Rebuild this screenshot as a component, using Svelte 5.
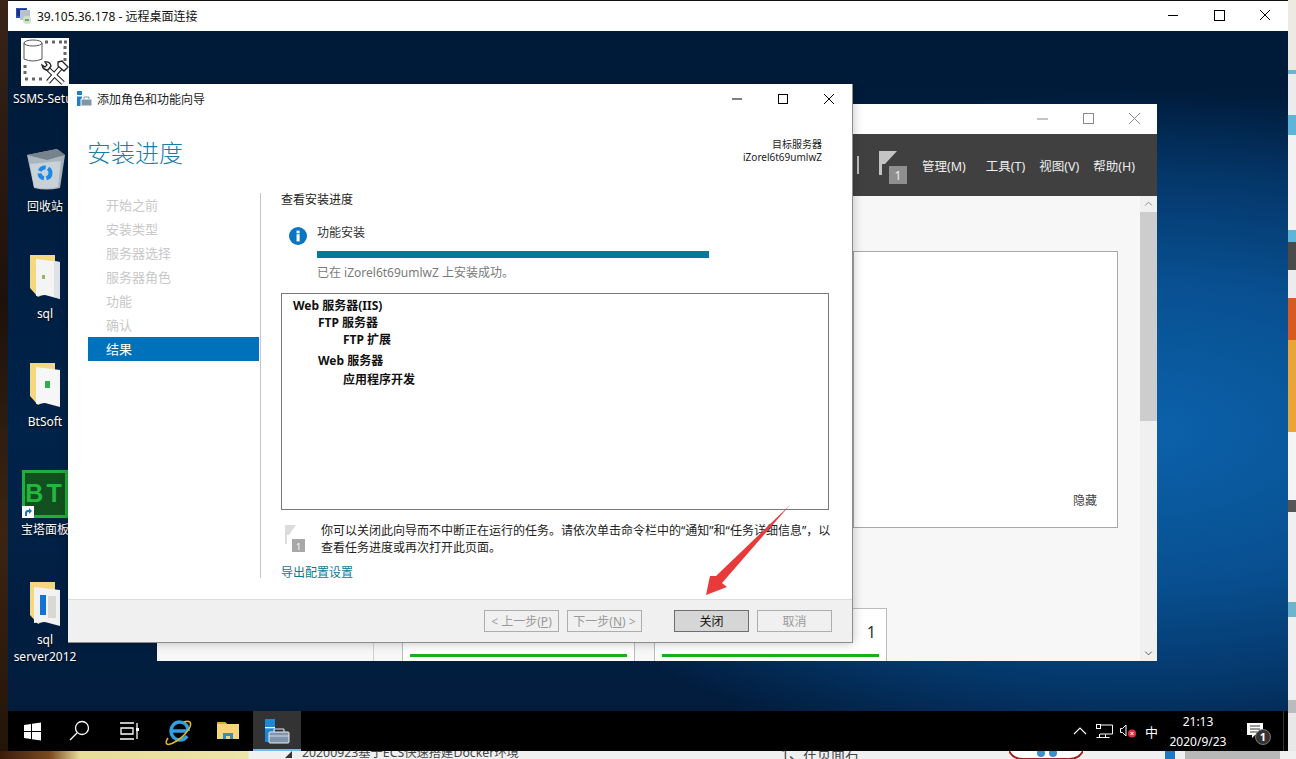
<script>
  const steps = ['开始之前', '安装类型', '服务器选择', '服务器角色', '功能', '确认']
  const menus = ['管理(M)', '工具(T)', '视图(V)', '帮助(H)']
  const edgeBands = [
    { h: 70, c: '#eceae2' }, { h: 4, c: '#6fb4cf' }, { h: 41, c: '#ececec' },
    { h: 20, c: '#5db6da' }, { h: 95, c: '#f2f2f2' }, { h: 12, c: '#5db6da' },
    { h: 28, c: '#4a4a4a' }, { h: 28, c: '#ececec' }, { h: 42, c: '#d95a20' },
    { h: 92, c: '#eaa53a' }, { h: 68, c: '#f4f4f4' }, { h: 12, c: '#555555' },
    { h: 90, c: '#f0f0f0' }, { h: 15, c: '#6fb4cf' }, { h: 83, c: '#f0f0f0' },
    { h: 13, c: '#bbbbbb' }, { h: 46, c: '#e8e8e8' }
  ]
</script>

<div class="screen">
  <div class="photo"></div>
  <div class="edge">
    {#each edgeBands as b}
      <div style="height:{b.h}px;background:{b.c}"></div>
    {/each}
  </div>
  <div class="page-bottom">
    <svg class="doc-mark" viewBox="0 0 8 8"><path d="M0 8l8-8v8z" fill="#333" /></svg>
    <span class="doc-title">20200923基于ECS快速搭建Docker环境</span>
    <span class="doc-line">1、在页面右</span>
    <svg class="mascot" viewBox="0 0 74 8">
      <path d="M0 0q4 8 14 8h46q10 0 14-8" fill="#fff" stroke="#a02020" stroke-width="2" />
      <circle cx="32" cy="2" r="4" fill="#3a90c8" />
      <circle cx="44" cy="2" r="4" fill="#3a90c8" />
    </svg>
    <div class="doc-side"></div>
  </div>

  <div class="rdp">
    <header class="rdp-title">
      <svg class="rdp-icon" viewBox="0 0 16 16">
        <rect x="0" y="0" width="11" height="10" fill="#2b4fb0" />
        <rect x="1" y="1" width="9" height="7" fill="#1b2f86" />
        <rect x="4" y="2" width="10" height="10" fill="#b8c2cc" />
        <circle cx="11" cy="12" r="4" fill="#cfe3c8" />
        <path d="M9 12h4" stroke="#2d7d32" stroke-width="1.2" />
      </svg>
      <span>39.105.36.178 - 远程桌面连接</span>
      <div class="rdp-controls">
        <svg viewBox="0 0 46 31"><path d="M18 15.5h10" stroke="#000" /></svg>
        <svg viewBox="0 0 46 31"><rect x="18.500" y="10.500" width="10" height="10" fill="none" stroke="#000" /></svg>
        <svg viewBox="0 0 46 31"><path d="M18 10l10 10M28 10l-10 10" stroke="#000" /></svg>
      </div>
    </header>

    <div class="desktop">
      <div class="icon" style="left:0;top:5px">
        <svg class="tile" viewBox="0 0 48 48">
          <rect width="48" height="48" fill="#fff" />
          <ellipse cx="12" cy="5" rx="9" ry="3" fill="none" stroke="#555" />
          <path d="M3 5v16q9 4 18 0V5" fill="none" stroke="#555" />
          <path d="M24 4h3M31 4h3M38 4h3M43 4h3M44 8v3M44 14v3M44 20v3M4 27v3M4 33v3M4 41h3M11 41h3M18 41h3" stroke="#666" stroke-width="3" />
          <path d="M26 30l16 15M42 27L27 44" stroke="#222" stroke-width="5" />
          <path d="M26 30l16 15M42 27L27 44" stroke="#fff" stroke-width="3" />
          <path d="M24 24q5-1 6 4l-3 4q-5 0-6-5l3 2 2-2zM37 24l4-1 6 6-4 4-6-5z" fill="#fff" stroke="#222" stroke-width="1.300" />
        </svg>
        <span class="ssms">SSMS-Setup</span>
      </div>

      <div class="icon" style="left:0;top:115px">
        <svg class="glyph" viewBox="0 0 48 48">
          <path d="M6 9l30-6 8 6-5 33q-14 3-26 0z" fill="#aab6bf" />
          <path d="M6 9l30-6 8 6-18 5z" fill="#76838c" />
          <path d="M9 18l31-3-3 26q-12 3-24 0z" fill="#c8d2d8" />
          <circle cx="24" cy="27" r="5.500" fill="none" stroke="#1e88e5" stroke-width="4" stroke-dasharray="7 2.500" />
        </svg>
        <span>回收站</span>
      </div>

      <div class="icon" style="left:0;top:222px">
        <svg class="glyph folder" viewBox="0 0 48 48">
          <path d="M10 2h25v38H26l-8 4-8-9z" fill="#f5d77e" />
          <path d="M16 6l24 3v37l-15-4-9 1z" fill="#f4f4f4" />
          <path d="M40 9v37l-6-2V8z" fill="#dde3e8" />
          <rect x="22" y="22" width="3" height="4" fill="#9fb06a" />
        </svg>
        <span>sql</span>
      </div>

      <div class="icon" style="left:0;top:330px">
        <svg class="glyph folder" viewBox="0 0 48 48">
          <path d="M10 2h25v38H26l-8 4-8-9z" fill="#f5d77e" />
          <path d="M16 6l24 3v37l-15-4-9 1z" fill="#f6f6f6" />
          <rect x="25" y="20" width="5" height="7" fill="#2fae4e" />
        </svg>
        <span>BtSoft</span>
      </div>

      <div class="icon" style="left:0;top:439px">
        <div class="bt">BT
          <svg class="shortcut" viewBox="0 0 12 12">
            <rect width="12" height="12" fill="#fff" />
            <path d="M3 10V7q0-3 3-3h1V2l3 3-3 3V6H6q-1 0-1 2v2z" fill="#1c6fc9" />
          </svg>
        </div>
        <span class="low">宝塔面板</span>
      </div>

      <div class="icon" style="left:0;top:549px">
        <svg class="glyph folder" viewBox="0 0 48 48">
          <path d="M10 2h25v38H26l-8 4-8-9z" fill="#f5d77e" />
          <path d="M14 7l26 3v36l-15-4-11 1z" fill="#f2f2f2" />
          <rect x="20" y="15" width="6" height="20" fill="#1473d0" />
          <path d="M28 16h8v22h-8z" fill="#d8d8d4" />
        </svg>
        <span class="two">sql<br />server2012</span>
      </div>

      <section class="manager">
        <div class="mgr-title">
          <svg viewBox="0 0 46 30"><path d="M18 15h11" stroke="#8a8a8a" /></svg>
          <svg viewBox="0 0 46 30"><rect x="18.500" y="9.500" width="10" height="10" fill="none" stroke="#8a8a8a" /></svg>
          <svg viewBox="0 0 46 30"><path d="M18 9l11 11M29 9l-11 11" stroke="#8a8a8a" /></svg>
        </div>
        <div class="mgr-bar">
          <i class="divider"></i>
          <svg class="mgr-flag" viewBox="0 0 30 34">
            <path d="M0 0h3v24H0zM3 0h15L6 13H3z" fill="#c4c4c4" />
            <rect x="10" y="15" width="18" height="18" fill="#8f8f8f" />
            <text x="19" y="29" class="flag-num">1</text>
          </svg>
          <nav class="mgr-menu">
            {#each menus as m}<span>{m}</span>{/each}
          </nav>
        </div>
        <div class="mgr-body">
          <div class="mgr-main">
            <div class="hide-panel"><span>隐藏</span></div>
            <div class="tiles">
              <div class="rail"></div>
              <div class="tile-card"><b>1</b><i></i></div>
              <div class="tile-card"><b>1</b><i></i></div>
            </div>
          </div>
          <div class="scroll">
            <svg class="chev" viewBox="0 0 17 17"><path d="M5 10l3.500-3.500L12 10" fill="none" stroke="#8a8a8a" /></svg>
            <div class="thumb"></div>
            <svg class="chev bottom" viewBox="0 0 17 17"><path d="M5 7l3.500 3.500L12 7" fill="none" stroke="#555" /></svg>
          </div>
        </div>
      </section>

      <section class="wizard">
        <div class="wiz-title">
          <svg class="wiz-icon" viewBox="0 0 15 15">
            <rect x="0" y="0" width="5" height="15" fill="#1f80c8" />
            <rect x="0" y="4" width="5" height="1.500" fill="#fff" />
            <path d="M4 8h11v7H4z" fill="#7f96a8" stroke="#fff" stroke-width="1" />
            <path d="M7 8V6h5v2" fill="none" stroke="#7f96a8" />
          </svg>
          <span>添加角色和功能向导</span>
          <div class="wiz-controls">
            <svg viewBox="0 0 46 30"><path d="M18 15h10" stroke="#000" /></svg>
            <svg viewBox="0 0 46 30"><rect x="18.500" y="10.500" width="9" height="9" fill="none" stroke="#000" /></svg>
            <svg viewBox="0 0 46 30"><path d="M18 10l10 10M28 10l-10 10" stroke="#000" /></svg>
          </div>
        </div>

        <div class="wiz-head">
          <h1>安装进度</h1>
          <div class="target">目标服务器<br />iZorel6t69umlwZ</div>
        </div>

        <div class="wiz-content">
          <ul class="steps">
            {#each steps as s}<li>{s}</li>{/each}
            <li class="active">结果</li>
          </ul>
          <div class="pane">
            <div class="pane-title">查看安装进度</div>
            <div class="status">
              <svg class="info" viewBox="0 0 20 20">
                <circle cx="10" cy="10" r="10" fill="#0a75c2" />
                <rect x="8.400" y="8" width="3.400" height="8" fill="#fff" />
                <rect x="8.400" y="4" width="3.400" height="3" fill="#fff" />
              </svg>
              <div class="status-text">
                <div>功能安装</div>
                <div class="bar"></div>
                <div class="ok">已在 iZorel6t69umlwZ 上安装成功。</div>
              </div>
            </div>
            <div class="results">
              <div class="lv0">Web 服务器(IIS)</div>
              <div class="lv1">FTP 服务器</div>
              <div class="lv2">FTP 扩展</div>
              <div class="lv1 gap">Web 服务器</div>
              <div class="lv2 gap2">应用程序开发</div>
            </div>
            <div class="note">
              <svg class="note-flag" viewBox="0 0 20 28">
                <path d="M0 0h2v19H0zM2 0h9L4 10H2z" fill="#dcdcdc" />
                <rect x="7" y="14" width="13" height="13" fill="#a8a8a8" />
                <text x="13.500" y="24.500" class="flag-num small">1</text>
              </svg>
              <p>你可以关闭此向导而不中断正在运行的任务。请依次单击命令栏中的“通知”和“任务详细信息”，以<br />查看任务进度或再次打开此页面。</p>
            </div>
            <a class="export" href="#export">导出配置设置</a>
          </div>
        </div>

        <footer class="wiz-foot">
          <button disabled>&lt; 上一步(<u>P</u>)</button>
          <button disabled>下一步(<u>N</u>) &gt;</button>
          <button class="primary">关闭</button>
          <button disabled>取消</button>
        </footer>
      </section>

      <svg class="arrow" viewBox="700 505 95 95">
        <path d="M790 505L716 576l-6 0-4 19 21-8-5-4z" fill="#e83a3a" />
      </svg>
    </div>

    <div class="taskbar">
      <svg class="tb" viewBox="0 0 48 40">
        <path d="M16 14l7-1v7h-7zM24 12.800l9-1.300V20h-9zM16 21h7v7l-7-1zM24 21h9v8.500l-9-1.300z" fill="#fff" />
      </svg>
      <svg class="tb" viewBox="0 0 48 40">
        <circle cx="26" cy="17" r="6.500" fill="none" stroke="#fff" stroke-width="1.300" />
        <path d="M21 22l-7 7" stroke="#fff" stroke-width="1.300" />
      </svg>
      <svg class="tb" viewBox="0 0 48 40">
        <path d="M16 12h14M16 28h14M17 17h12v6H17zM33 12v16" fill="none" stroke="#fff" stroke-width="1.300" />
        <rect x="32" y="17" width="3" height="3" fill="#fff" />
      </svg>
      <svg class="tb ie" viewBox="0 0 48 40">
        <path d="M15 24h17M33 24c0-6-4-9-8.500-9S16 19 16 24s4 9 8.500 9c3.500 0 6-1.500 7.500-4" fill="none" stroke="#2f9fe0" stroke-width="3.600" transform="translate(0 -4)" />
        <path d="M13 27c-4 6-1 8 5 5 7-3 14-10 17-16 2-5-1-7-6-5" fill="none" stroke="#e8b820" stroke-width="1.500" />
      </svg>
      <svg class="tb fold" viewBox="0 0 48 40">
        <path d="M12 11h8l2 2h12v15H12z" fill="#f5d57a" />
        <path d="M12 11h8l2 2H12z" fill="#e0a92c" />
        <path d="M18 28v-6h10v6h-3v-3h-4v3z" fill="#2f8fc8" />
      </svg>
      <div class="tb-active">
        <svg viewBox="0 0 48 38">
          <rect x="12" y="8" width="10" height="23" fill="#1e88d8" />
          <rect x="12" y="16" width="10" height="1.300" fill="#fff" />
          <rect x="16" y="21" width="20" height="11" rx="1" fill="#7f95ad" stroke="#e8edf2" />
          <path d="M21 21v-3h10v3" fill="none" stroke="#e8edf2" />
          <path d="M16 25h20" stroke="#e8edf2" stroke-width="0.800" />
        </svg>
      </div>
      <div class="tray">
        <svg class="tray-ic chevup" viewBox="0 0 14 10"><path d="M1 8l6-6 6 6" fill="none" stroke="#fff" stroke-width="1.200" /></svg>
        <svg class="tray-ic net" viewBox="0 0 17 14">
          <path d="M.5 13.500h6M3.500 10v3M5 1h11.500v9H4M9.500 10.500v3M6.500 13.500h7" fill="none" stroke="#fff" />
          <rect x=".5" y=".5" width="4" height="4" fill="none" stroke="#fff" />
        </svg>
        <svg class="tray-ic vol" viewBox="0 0 16 14">
          <path d="M.5 4.500h2L6 1v11L2.500 8.500h-2z" fill="none" stroke="#fff" />
          <circle cx="12" cy="9.500" r="4" fill="#e0313f" />
          <path d="M10.500 8l3 3M13.500 8l-3 3" stroke="#fff" />
        </svg>
        <span class="ime">中</span>
        <div class="clock">21:13<br />2020/9/23</div>
        <div class="notify">
          <svg viewBox="0 0 18 17"><path d="M1 1h16v12h-8l-3 3v-3H1z" fill="#fff" /><path d="M4 4h10M4 7h10M4 10h7" stroke="#222" stroke-width="0.900" /></svg>
          <b>1</b>
        </div>
      </div>
      <i class="tb-sep"></i>
    </div>
  </div>
</div>

<style>
  :global(body) {
    margin: 0;
    background: #15100c;
    font-family: "Noto Sans", "Noto Sans CJK SC", sans-serif;
  }
  .screen {
    position: relative;
    width: 1296px;
    height: 759px;
    overflow: hidden;
    font-size: 12px;
    color: #1a1a1a;
  }
  .photo {
    position: absolute;
    left: 0;
    top: 0;
    width: 8px;
    height: 100%;
    background: linear-gradient(180deg, #3a2418 0%, #2a1a12 20%, #1c120c 40%, #2c1c10 55%, #3c2412 70%, #221408 100%);
  }
  .edge {
    position: absolute;
    right: 0;
    top: 0;
    width: 8px;
  }
  .page-bottom {
    position: absolute;
    left: 0;
    right: 0;
    top: 751px;
    height: 8px;
    overflow: hidden;
    background: linear-gradient(90deg, #3a1c0c 0, #7a4a20 50px, #e8dc98 80px, #ece4a8 248px, #f0f0f0 249px);
    color: #444;
    font-size: 12.300px;
    line-height: 8px;
  }
  .doc-mark {
    position: absolute;
    left: 285px;
    top: 0;
    width: 7px;
    height: 7px;
  }
  .doc-title {
    position: absolute;
    left: 302px;
    top: -2px;
  }
  .doc-line {
    position: absolute;
    left: 781px;
    top: -1px;
    font-size: 14px;
  }
  .mascot {
    position: absolute;
    left: 1009px;
    top: 0;
    width: 74px;
    height: 8px;
  }
  .doc-side {
    position: absolute;
    left: 1165px;
    top: 0;
    width: 115px;
    height: 8px;
    background: linear-gradient(90deg, #1e78c8 0 10px, #f0f0f0 10px 20px, #b8b8b8 20px);
  }

  .rdp {
    position: absolute;
    left: 8px;
    top: 1px;
    width: 1280px;
    height: 750px;
    display: flex;
    flex-direction: column;
  }
  .rdp-title {
    height: 30px;
    flex: none;
    background: #fff;
    display: flex;
    align-items: center;
    font-size: 12px;
    color: #111;
  }
  .rdp-icon {
    width: 16px;
    height: 16px;
    margin: 0 5px 0 8px;
  }
  .rdp-controls {
    margin-left: auto;
    display: flex;
    margin-top: -2px;
  }
  .rdp-controls svg {
    width: 46px;
    height: 31px;
  }
  .desktop {
    position: relative;
    flex: 1;
    overflow: hidden;
    background: radial-gradient(ellipse 680px 340px at 1130px 400px, #0b62ab 0%, #084f90 45%, #04376a 75%, rgba(4, 55, 106, 0) 100%),
      linear-gradient(180deg, #001a38 0%, #00234a 60%, #021c3c 100%);
  }

  .icon {
    position: absolute;
    width: 74px;
    display: flex;
    flex-direction: column;
    align-items: center;
    color: #fff;
    font-size: 12px;
    line-height: 16px;
    text-align: center;
    text-shadow: 0 1px 2px #000;
  }
  .icon span {
    margin-top: 5px;
    white-space: nowrap;
  }
  .icon .ssms {
    margin-left: 3px;
  }
  .icon .low {
    margin-top: 4px;
  }
  .icon .two {
    line-height: 17px;
    margin-top: 3px;
  }
  .tile {
    width: 48px;
    height: 48px;
    margin-top: 2px;
  }
  .glyph {
    width: 48px;
    height: 48px;
  }
  .folder {
    margin-left: -2px;
  }
  .bt {
    position: relative;
    box-sizing: border-box;
    width: 46px;
    height: 48px;
    background: #13501f;
    border: 3px solid #1fb03c;
    color: #22b83f;
    font: 700 25px/40px "Liberation Sans", sans-serif;
    letter-spacing: 3px;
    text-align: center;
    text-shadow: none;
  }
  .shortcut {
    position: absolute;
    left: -3px;
    bottom: -3px;
    width: 12px;
    height: 12px;
  }

  .manager {
    position: absolute;
    left: 149px;
    top: 73px;
    width: 1000px;
    height: 557px;
    background: #f7f7f7;
    display: flex;
    flex-direction: column;
  }
  .mgr-title {
    height: 30px;
    flex: none;
    background: #fff;
    display: flex;
    justify-content: flex-end;
  }
  .mgr-title svg {
    width: 46px;
    height: 30px;
  }
  .mgr-bar {
    height: 62px;
    flex: none;
    background: #404040;
    display: flex;
    align-items: center;
    color: #eee;
    padding-left: 700px;
    box-sizing: border-box;
  }
  .divider {
    width: 2px;
    height: 18px;
    background: #bbb;
    margin-right: 20px;
  }
  .mgr-flag {
    width: 30px;
    height: 34px;
    margin: 6px 13px 0 0;
  }
  .flag-num {
    fill: #eee;
    font-size: 12px;
    text-anchor: middle;
  }
  .flag-num.small {
    fill: #fff;
    font-size: 9px;
  }
  .mgr-menu {
    display: flex;
    gap: 14px;
    font-size: 12.500px;
    white-space: nowrap;
  }
  .mgr-menu span:first-child {
    margin-right: 6px;
  }
  .mgr-body {
    flex: 1;
    display: flex;
    min-height: 0;
  }
  .mgr-main {
    flex: 1;
    position: relative;
    overflow: hidden;
  }
  .hide-panel {
    position: absolute;
    left: 696px;
    top: 55px;
    box-sizing: border-box;
    width: 265px;
    height: 277px;
    background: #fff;
    border: 1px solid #a8a8a8;
    font-size: 12px;
    color: #444;
  }
  .hide-panel span {
    position: absolute;
    right: 20px;
    bottom: 18px;
  }
  .tiles {
    position: absolute;
    left: 216px;
    top: 412px;
    bottom: 0;
    right: 0;
    display: flex;
    gap: 19px;
    padding-left: 29px;
  }
  .rail {
    position: absolute;
    left: 0;
    top: 30px;
    bottom: 0;
    width: 1px;
    background: #d0d0d0;
  }
  .tile-card {
    position: relative;
    box-sizing: border-box;
    width: 233px;
    background: #fff;
    border: 1px solid #bbb;
    border-bottom: 0;
  }
  .tile-card b {
    position: absolute;
    right: 10px;
    top: 12px;
    font-size: 16px;
    font-weight: 400;
    color: #333;
  }
  .tile-card i {
    position: absolute;
    left: 7px;
    right: 7px;
    bottom: 4px;
    height: 3px;
    background: #12b312;
  }
  .scroll {
    position: relative;
    width: 17px;
    flex: none;
    background: #f0f0f0;
    display: flex;
    flex-direction: column;
  }
  .chev {
    width: 17px;
    height: 16px;
    flex: none;
  }
  .thumb {
    height: 209px;
    background: #cdcdcd;
  }
  .chev.bottom {
    margin-top: auto;
  }

  .wizard {
    position: absolute;
    left: 60px;
    top: 53px;
    box-sizing: border-box;
    width: 785px;
    height: 559px;
    background: #fff;
    border-right: 1px solid #8c8c8c;
    border-bottom: 1px solid #8c8c8c;
    display: flex;
    flex-direction: column;
    box-shadow: 0 0 10px rgba(0, 0, 0, 0.25);
  }
  .wiz-title {
    height: 30px;
    flex: none;
    display: flex;
    align-items: center;
    font-size: 12px;
  }
  .wiz-icon {
    width: 15px;
    height: 15px;
    margin: -1px 5px 0 9px;
  }
  .wiz-controls {
    margin-left: auto;
    display: flex;
  }
  .wiz-controls svg {
    width: 46px;
    height: 30px;
  }
  .wiz-head {
    height: 79px;
    flex: none;
    display: flex;
    justify-content: space-between;
    padding: 8px 30px 0 20px;
    box-sizing: border-box;
  }
  h1 {
    margin: 0 0 0 -1px;
    font-size: 24px;
    line-height: 62px;
    height: 62px;
    font-weight: 300;
    color: #1a7fa8;
  }
  .target {
    margin-top: 16px;
    font-size: 10px;
    line-height: 13px;
    text-align: right;
    color: #222;
  }
  .wiz-content {
    flex: 1;
    display: flex;
    min-height: 0;
  }
  .steps {
    list-style: none;
    margin: 0 0 0 20px;
    padding: 0;
    width: 171px;
    flex: none;
  }
  .steps li {
    height: 24px;
    line-height: 24px;
    padding-left: 18px;
    font-size: 13px;
    color: #c8c8c8;
  }
  .steps .active {
    background: #0072bc;
    color: #fff;
  }
  .pane {
    margin-left: 1px;
    border-left: 1px solid #c4c4c4;
    box-sizing: border-box;
    height: 385px;
    flex: 1;
    padding: 0 20px 0 20px;
    display: flex;
    flex-direction: column;
    white-space: nowrap;
  }
  .pane-title {
    font-size: 12px;
    line-height: 12px;
    padding-top: 1px;
    color: #222;
  }
  .status {
    display: flex;
    margin: 19px 0 0 8px;
    height: 68px;
    flex: none;
  }
  .info {
    width: 18px;
    height: 18px;
    margin: 2px 10px 0 0;
    flex: none;
  }
  .status-text {
    flex: 1;
    font-size: 12px;
    color: #333;
  }
  .status-text > div:first-child {
    line-height: 16px;
  }
  .bar {
    width: 392px;
    height: 7px;
    margin-top: 10px;
    background: #05789c;
  }
  .ok {
    margin-top: 7px;
    line-height: 16px;
    color: #7a7a7a;
  }
  .results {
    box-sizing: border-box;
    width: 548px;
    height: 217px;
    flex: none;
    border: 1px solid #7a7a7a;
    padding: 3px 11px;
    font-size: 12px;
    font-weight: 700;
    line-height: 17px;
    color: #111;
  }
  .lv1 {
    padding-left: 25px;
  }
  .lv2 {
    padding-left: 50px;
  }
  .results .gap {
    margin-top: 4px;
  }
  .results .gap2 {
    margin-top: 2px;
  }
  .note {
    display: flex;
    margin: 12px 0 0 4px;
  }
  .note-flag {
    width: 20px;
    height: 28px;
    margin: 3px 16px 0 0;
    flex: none;
  }
  .note p {
    margin: 0;
    font-size: 12px;
    line-height: 17px;
    color: #222;
  }
  .export {
    margin-top: 9px;
    font-size: 12px;
    line-height: 16px;
    color: #0a7a96;
    text-decoration: none;
  }
  .wiz-foot {
    height: 43px;
    flex: none;
    box-sizing: border-box;
    background: #f0f0f0;
    border-top: 1px solid #dcdcdc;
    display: flex;
    align-items: center;
    justify-content: flex-end;
    padding: 0 20px 0 0;
    gap: 8px;
  }
  button {
    width: 75px;
    height: 22px;
    padding: 1px 0 0;
    border: 1px solid #adadad;
    background: #f0f0f0;
    font: 12px "Noto Sans", "Noto Sans CJK SC", sans-serif;
    line-height: 18px;
    color: #9a9a9a;
  }
  button:nth-child(3) {
    margin-left: 24px;
  }
  button.primary {
    background: #d6d6d6;
    border-color: #6e6e6e;
    color: #111;
  }
  .arrow {
    position: absolute;
    left: 692px;
    top: 474px;
    width: 95px;
    height: 95px;
  }

  .taskbar {
    position: relative;
    height: 40px;
    flex: none;
    background: #000;
    display: flex;
  }
  .tb {
    width: 48px;
    height: 40px;
    flex: none;
  }
  .tb.ie {
    margin-left: 3px;
  }
  .tb.fold {
    margin-left: 2px;
  }
  .tb-active {
    width: 48px;
    background: #333;
    border-bottom: 2px solid #76b9ed;
    box-sizing: border-box;
  }
  .tb-active svg {
    width: 48px;
    height: 38px;
    display: block;
  }
  .tb-sep {
    position: absolute;
    left: 1275px;
    top: 0;
    bottom: 0;
    width: 1px;
    background: #333;
  }
  .tray {
    margin-left: auto;
    display: flex;
    align-items: center;
    color: #fff;
  }
  .tray-ic {
    flex: none;
  }
  .chevup {
    width: 14px;
    height: 10px;
    margin-right: 9px;
  }
  .net {
    width: 17px;
    height: 14px;
    margin-right: 7px;
  }
  .vol {
    width: 16px;
    height: 14px;
    margin-right: 9px;
  }
  .ime {
    font-size: 13px;
    width: 13px;
    margin-right: 10px;
  }
  .clock {
    width: 60px;
    font-size: 12px;
    line-height: 20px;
    padding-top: 1px;
    text-align: center;
    margin-right: 16px;
  }
  .notify {
    position: relative;
    width: 32px;
    height: 30px;
    margin-right: 12px;
  }
  .notify svg {
    position: absolute;
    left: 2px;
    top: 6px;
    width: 18px;
    height: 17px;
  }
  .notify b {
    position: absolute;
    left: 11px;
    top: 13px;
    box-sizing: border-box;
    width: 16px;
    height: 16px;
    border-radius: 50%;
    background: #333;
    border: 1px solid #777;
    font-size: 11px;
    line-height: 14px;
    text-align: center;
  }
</style>
